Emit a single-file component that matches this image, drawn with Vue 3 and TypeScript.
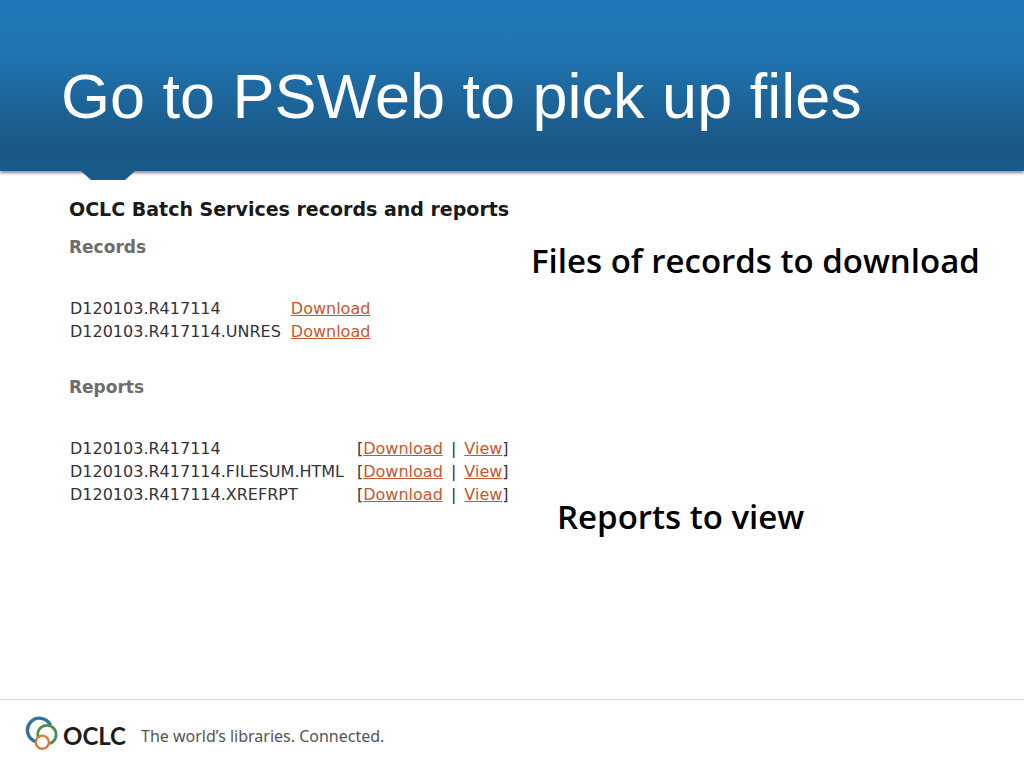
<script setup lang="ts">
interface FileRow {
  name: string
}

const records: FileRow[] = [
  { name: 'D120103.R417114' },
  { name: 'D120103.R417114.UNRES' },
]

const reports: FileRow[] = [
  { name: 'D120103.R417114' },
  { name: 'D120103.R417114.FILESUM.HTML' },
  { name: 'D120103.R417114.XREFRPT' },
]
</script>

<template>
  <div class="slide">
    <header class="banner">
      <h1>Go to PSWeb to pick up files</h1>
      <svg class="notch" width="54" height="9" viewBox="0 0 54 9" aria-hidden="true">
        <path d="M0 0H54L44 9H10Z" fill="#1a5a89" />
      </svg>
    </header>

    <main class="content">
      <h2>OCLC Batch Services records and reports</h2>
      <section class="group">
        <div class="listing">
          <h3>Records</h3>
          <table>
            <tbody>
              <tr v-for="row in records" :key="row.name">
                <td>{{ row.name }}</td>
                <td><a href="#">Download</a></td>
              </tr>
            </tbody>
          </table>
        </div>
        <p class="note note-records">Files of records to download</p>
      </section>
      <section class="group">
        <div class="listing">
          <h3>Reports</h3>
          <table class="reports">
            <tbody>
              <tr v-for="row in reports" :key="row.name">
                <td>{{ row.name }}</td>
                <td>[<a href="#">Download</a> <span class="divider">|</span> <a href="#">View</a>]</td>
              </tr>
            </tbody>
          </table>
        </div>
        <p class="note note-reports">Reports to view</p>
      </section>
    </main>

    <footer class="footer">
      <svg class="rings" width="34" height="36" viewBox="0 0 34 36" fill="none" aria-hidden="true">
        <path d="M10.5 26.5A12 12 0 1 1 25.4 10.2" stroke="#34719f" stroke-width="3.4" />
        <path d="M13.2 23A9.3 9.3 0 1 1 24.5 28.6" stroke="#4b9150" stroke-width="2.8" />
        <circle cx="17.3" cy="27.2" r="6.6" stroke="#d9793f" stroke-width="2.4" />
      </svg>
      <span class="brand">OCLC</span>
      <span class="tagline">The world’s libraries. Connected.</span>
    </footer>
  </div>
</template>

<style>
body {
  margin: 0;
  background: #fff;
}
</style>

<style scoped>
.slide {
  display: flex;
  flex-direction: column;
  min-height: 100vh;
  font-family: "DejaVu Sans", Verdana, sans-serif;
  color: #333338;
}

h1, h2, h3, p {
  margin: 0;
}

.banner {
  position: relative;
  box-sizing: border-box;
  min-height: 171px;
  padding: 60px 61px 39px;
  background: linear-gradient(#2278b6 0%, #2075b2 30%, #1b5f91 70%, #1a5885 85%, #1a5a89 100%);
  box-shadow: 0 2px 3px rgba(60, 50, 70, 0.6);
}

h1 {
  font: 400 63px/72px "Liberation Sans", Arial, sans-serif;
  color: #fff;
}

.notch {
  position: absolute;
  left: 81px;
  top: 100%;
}

.content {
  flex: 1;
  padding: 26px 32px 0 69px;
}

h2 {
  font-size: 19px;
  line-height: 24px;
  color: #1a1a1a;
}

.group {
  display: grid;
  grid-template-columns: 462px 1fr;
  min-height: 140px;
}

h2 + .group {
  margin-top: 14px;
}

h3 {
  font-size: 17px;
  line-height: 24px;
  color: #6c6c6c;
}

table {
  margin-top: 38px;
  border-collapse: collapse;
  font-size: 16px;
  line-height: 23px;
}

td {
  padding: 0 9px 0 1px;
  white-space: nowrap;
}

.reports td:first-child {
  padding-right: 12px;
}

.divider {
  margin: 0 3px;
}

a {
  color: #c8572c;
  text-decoration: underline;
}

.note {
  font: 600 33px/40px "Open Sans", "Trebuchet MS", sans-serif;
  color: #000;
  white-space: nowrap;
}

.note-records {
  padding-top: 6px;
}

.note-reports {
  padding: 122px 0 0 26px;
}

.footer {
  display: flex;
  align-items: center;
  height: 68px;
  padding: 0 25px;
  border-top: 1px solid #dedede;
}

.rings {
  margin-bottom: 2px;
}

.brand {
  margin: 3px 0 0 4px;
  font: 700 24px/28px Lato, sans-serif;
  color: #1c1c1c;
}

.tagline {
  margin: 3px 0 0 15px;
  font: 400 16px/24px "Noto Sans", Tahoma, sans-serif;
  color: #555;
}
</style>
